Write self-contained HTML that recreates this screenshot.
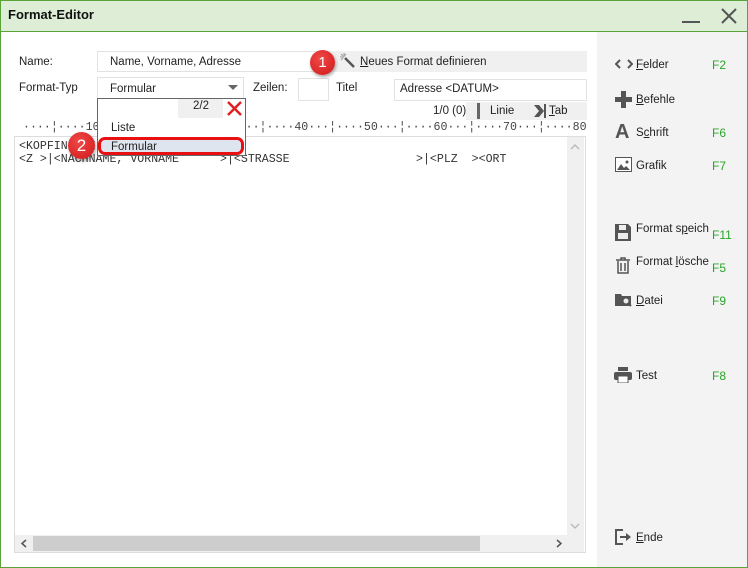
<!DOCTYPE html>
<html><head><meta charset="utf-8"><style>
*{margin:0;padding:0;box-sizing:border-box}
body{width:748px;height:568px;overflow:hidden;background:#fff;font-family:"Liberation Sans",sans-serif;font-size:11.5px;color:#222;position:relative}
.a{position:absolute;white-space:pre;line-height:16px}
.m{font-family:"Liberation Mono",monospace;font-size:11.6px;color:#333;line-height:14px}
.g{color:#2aa52a;font-size:12px}
u{text-decoration:underline}
</style></head><body>
<div class="a" style="left:0;top:0;width:748px;height:568px;border:1px solid #5aa33a"></div>
<div class="a" style="left:0;top:0;width:748px;height:32px;background:#deedd6;border:1px solid #5aa33a"></div>
<div class="a" style="left:8px;top:7px;font-size:13px;font-weight:bold;color:#111">Format-Editor</div>
<div class="a" style="left:682px;top:21px;width:18px;height:2px;background:#555"></div>
<svg class="a" style="left:721px;top:8px" width="16" height="16"><path d="M1 1L15 15M15 1L1 15" stroke="#555" stroke-width="2"/></svg>
<div class="a" style="left:597px;top:32px;width:150px;height:535px;background:#f3f3f3"></div>

<div class="a" style="left:19px;top:54px">Name:</div>
<div class="a" style="left:97px;top:51px;width:240px;height:21px;border:1px solid #e2e2e2"></div>
<div class="a" style="left:110px;top:54px">Name, Vorname, Adresse</div>
<div class="a" style="left:330px;top:51px;width:257px;height:21px;background:#f0f0f0"></div>
<svg class="a" style="left:340px;top:53px" width="16" height="16"><path d="M5 5L14 14" stroke="#555" stroke-width="2.5"/><path d="M4 0V4M0 4H4M1 1L3 3M6 1L4 3M1 7L3 5" stroke="#999" stroke-width="1"/></svg>
<div class="a" style="left:360px;top:54px"><u>N</u>eues Format definieren</div>

<div class="a" style="left:19px;top:80px">Format-Typ</div>
<div class="a" style="left:97px;top:77px;width:147px;height:22px;border:1px solid #e2e2e2"></div>
<div class="a" style="left:110px;top:81px">Formular</div>
<svg class="a" style="left:228px;top:85px" width="10" height="6"><path d="M0 0H10L5 5Z" fill="#666"/></svg>
<div class="a" style="left:253px;top:80px">Zeilen:</div>
<div class="a" style="left:298px;top:78px;width:31px;height:23px;border:1px solid #e2e2e2"></div>
<div class="a" style="left:336px;top:80px">Titel</div>
<div class="a" style="left:394px;top:79px;width:193px;height:22px;border:1px solid #e2e2e2"></div>
<div class="a" style="left:400px;top:81px">Adresse &lt;DATUM&gt;</div>

<div class="a" style="left:433px;top:103px">1/0 (0)</div>
<div class="a" style="left:466px;top:102px;width:121px;height:18px;background:#f0f0f0"></div>
<div class="a" style="left:477px;top:103px;width:3px;height:16px;background:#666"></div>
<div class="a" style="left:490px;top:103px">Linie</div>
<svg class="a" style="left:533px;top:103px" width="14" height="16"><path d="M1 2L6 2L11 8L6 14L1 14L6 8Z" fill="#555"/><rect x="11" y="1" width="2" height="14" fill="#555"/></svg>
<div class="a" style="left:549px;top:103px"><u>T</u>ab</div>

<div class="a m" style="left:23px;top:121px;color:#444">····¦····10···¦····20···¦····30···¦····40···¦····50···¦····60···¦····70···¦····80</div>

<div class="a" style="left:14px;top:136px;width:572px;height:417px;border:1px solid #ddd"></div>
<div class="a" style="left:567px;top:137px;width:17px;height:398px;background:#f0f0f0"></div>
<svg class="a" style="left:570px;top:143px" width="10" height="8"><path d="M1 6L5 2L9 6" stroke="#bbb" fill="none" stroke-width="1.5"/></svg>
<svg class="a" style="left:570px;top:522px" width="10" height="8"><path d="M1 2L5 6L9 2" stroke="#bbb" fill="none" stroke-width="1.5"/></svg>
<div class="a" style="left:15px;top:535px;width:569px;height:17px;background:#f0f0f0"></div>
<div class="a" style="left:33px;top:536px;width:447px;height:15px;background:#cdcdcd"></div>
<svg class="a" style="left:21px;top:539px" width="6" height="9"><path d="M5 1L1 4.5L5 8" stroke="#555" fill="none" stroke-width="1.5"/></svg>
<svg class="a" style="left:556px;top:539px" width="6" height="9"><path d="M1 1L5 4.5L1 8" stroke="#555" fill="none" stroke-width="1.5"/></svg>

<div class="a m" style="left:19px;top:140px">&lt;KOPFINFO:E</div>
<div class="a m" style="left:19px;top:153px">&lt;Z &gt;|&lt;NACHNAME, VORNAME</div>
<div class="a m" style="left:220px;top:153px">&gt;|&lt;STRASSE</div>
<div class="a m" style="left:416px;top:153px">&gt;|&lt;PLZ  &gt;&lt;ORT</div>

<div class="a" style="left:97px;top:98px;width:149px;height:58px;background:#fff;border:1px solid #666"></div>
<div class="a" style="left:178px;top:99px;width:45px;height:19px;background:#f0f0f0"></div>
<div class="a" style="left:193px;top:98px">2/2</div>
<svg class="a" style="left:227px;top:101px" width="15" height="15"><path d="M1 1L14 14M14 1L1 14" stroke="#e02020" stroke-width="2.5"/></svg>
<div class="a" style="left:111px;top:120px">Liste</div>
<div class="a" style="left:98px;top:137px;width:146px;height:18px;background:#dfe5ee;border:3px solid #e81010;border-radius:7px"></div>
<div class="a" style="left:111px;top:139px">Formular</div>

<div class="a" style="left:310px;top:50px;width:25px;height:25px;border-radius:50%;background:radial-gradient(circle at 40% 35%,#f04848,#d01818);box-shadow:1px 2px 3px rgba(0,0,0,.35);color:#fff;font-size:15px;text-align:center;line-height:25px">1</div>
<div class="a" style="left:68px;top:132px;width:27px;height:27px;border-radius:50%;background:radial-gradient(circle at 40% 35%,#f04848,#d01818);box-shadow:1px 2px 3px rgba(0,0,0,.35);color:#fff;font-size:17px;text-align:center;line-height:27px">2</div>

<svg class="a" style="left:615px;top:59px" width="18" height="10"><path d="M5 1L1 5L5 9M13 1L17 5L13 9" stroke="#555" fill="none" stroke-width="2"/></svg>
<div class="a" style="left:636px;top:57px"><u>F</u>elder</div><div class="a g" style="left:712px;top:57px">F2</div>
<svg class="a" style="left:615px;top:91px" width="17" height="17"><path d="M6 0H11V6H17V11H11V17H6V11H0V6H6Z" fill="#555"/></svg>
<div class="a" style="left:636px;top:92px"><u>B</u>efehle</div>
<div class="a" style="left:615px;top:120px;font-size:20px;font-weight:bold;color:#555;line-height:24px">A</div>
<div class="a" style="left:636px;top:125px">S<u>c</u>hrift</div><div class="a g" style="left:712px;top:125px">F6</div>
<svg class="a" style="left:615px;top:157px" width="17" height="15"><rect x="0.5" y="0.5" width="16" height="14" fill="#fff" stroke="#555"/><path d="M2 13L6 7L9 11L11 9L15 13Z" fill="#555"/><circle cx="12" cy="5" r="1.5" fill="#555"/></svg>
<div class="a" style="left:636px;top:158px">Grafik</div><div class="a g" style="left:712px;top:158px">F7</div>
<svg class="a" style="left:615px;top:224px" width="16" height="17"><path d="M0 0H13L16 3V17H0Z" fill="#555"/><rect x="4" y="1" width="7" height="5" fill="#eee"/><rect x="3" y="9" width="10" height="6" fill="#eee"/></svg>
<div class="a" style="left:636px;top:221px">Format s<u>p</u>eich</div><div class="a g" style="left:712px;top:227px">F11</div>
<svg class="a" style="left:616px;top:257px" width="14" height="17"><path d="M0 3H14M5 3V1H9V3" stroke="#555" fill="none" stroke-width="1.5"/><path d="M2 4V16H12V4M5 6V14M9 6V14" stroke="#555" fill="none" stroke-width="1.5"/></svg>
<div class="a" style="left:636px;top:254px">Format <u>l</u>ösche</div><div class="a g" style="left:712px;top:260px">F5</div>
<svg class="a" style="left:615px;top:292px" width="18" height="15"><path d="M0 2H6L7 4H16V14H0Z" fill="#555"/><circle cx="11" cy="9" r="3" fill="#eee" stroke="#555"/><path d="M13 11L16 14" stroke="#555" stroke-width="2"/></svg>
<div class="a" style="left:636px;top:293px"><u>D</u>atei</div><div class="a g" style="left:712px;top:293px">F9</div>
<svg class="a" style="left:614px;top:367px" width="18" height="16"><rect x="4" y="0" width="10" height="4" fill="#555"/><rect x="0" y="5" width="18" height="8" rx="2" fill="#555"/><rect x="4" y="9" width="10" height="7" fill="#fff" stroke="#555"/></svg>
<div class="a" style="left:636px;top:368px">Test</div><div class="a g" style="left:712px;top:368px">F8</div>
<svg class="a" style="left:615px;top:529px" width="18" height="16"><path d="M8 1H1V15H8" stroke="#555" fill="none" stroke-width="2"/><path d="M5 7H11V4L16 8L11 12V9H5Z" fill="#555"/></svg>
<div class="a" style="left:636px;top:530px"><u>E</u>nde</div>
</body></html>
